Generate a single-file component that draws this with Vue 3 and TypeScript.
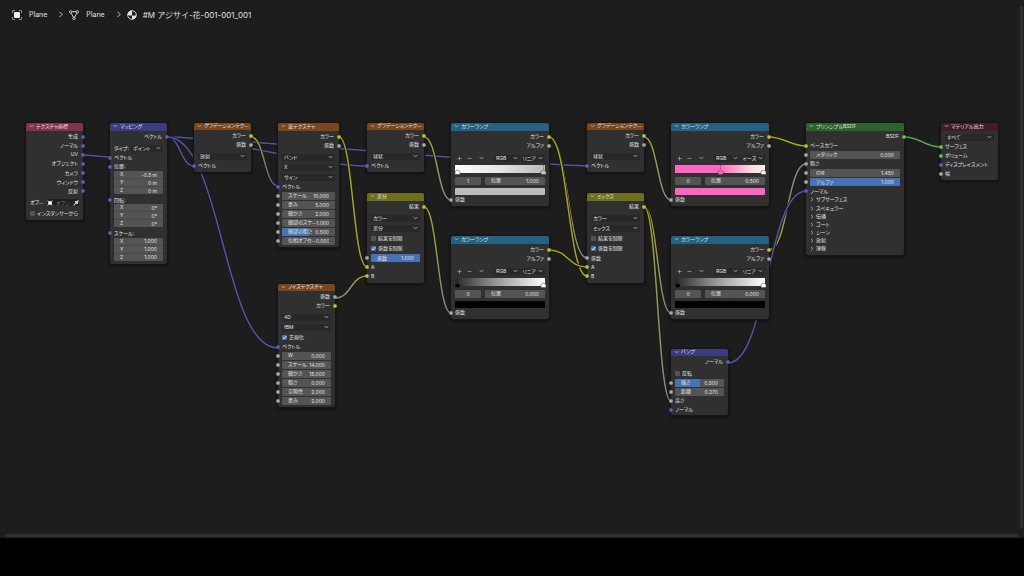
<script setup lang="ts">
type Tone = 'vec' | 'col' | 'val' | 'shd'

interface Row {
  kind: 'out' | 'in' | 'field' | 'select' | 'check' | 'vector' | 'panel' | 'object' | 'ramp'
  label?: string
  tone?: Tone
  value?: string
  fill?: number
  on?: boolean
  gap?: boolean
  axes?: string[]
  ramp?: Ramp
}

interface Ramp {
  index: string
  position: string
  mode: string
  gradient: string
  swatch: string
  stops: { at: number; color: string; active: boolean }[]
}

interface GraphNode {
  id: string
  title: string
  theme: string
  x: number
  y: number
  w: number
  h: number
  rows: Row[]
}

interface Wire {
  from: [number, number]
  to: [number, number]
  a: Tone
  b: Tone
}

const toneColor: Record<Tone, string> = {
  vec: '#6363c7',
  col: '#c7c729',
  val: '#a1a1a1',
  shd: '#63c763',
}

const out = (label: string, tone: Tone): Row => ({ kind: 'out', label, tone })
const inp = (label: string, tone: Tone): Row => ({ kind: 'in', label, tone })
const pick = (value: string, gap = false, label = ''): Row => ({ kind: 'select', value, gap, label })
const num = (label: string, value: string, fill = 0): Row => ({ kind: 'field', label, value, fill, tone: 'val' })
const check = (label: string, on: boolean, gap = false): Row => ({ kind: 'check', label, on, gap })
const panel = (label: string): Row => ({ kind: 'panel', label })

const gradientRows = (shape: string): Row[] => [
  out('カラー', 'col'),
  out('係数', 'val'),
  pick(shape, true),
  inp('ベクトル', 'vec'),
]

const rampRows = (ramp: Ramp): Row[] => [
  out('カラー', 'col'),
  out('アルファ', 'val'),
  { kind: 'ramp', ramp },
  inp('係数', 'val'),
]

const blackRamp: Ramp = {
  index: '0',
  position: '0.000',
  mode: 'リニア',
  gradient: 'linear-gradient(90deg, #262626, #8c8c8c 40%, #ffffff)',
  swatch: '#000000',
  stops: [
    { at: 0, color: '#000000', active: true },
    { at: 1, color: '#ffffff', active: false },
  ],
}

const nodes: GraphNode[] = [
  {
    id: 'coord', title: 'テクスチャ座標', theme: 'input', x: 26, y: 123, w: 57, h: 97,
    rows: [
      out('生成', 'vec'), out('ノーマル', 'vec'), out('UV', 'vec'), out('オブジェクト', 'vec'),
      out('カメラ', 'vec'), out('ウィンドウ', 'vec'), out('反射', 'vec'),
      { kind: 'object', label: 'オブ…', value: 'オブジ', gap: true },
      check('インスタンサーから', false),
    ],
  },
  {
    id: 'mapping', title: 'マッピング', theme: 'vector', x: 110, y: 123, w: 57, h: 141,
    rows: [
      out('ベクトル', 'vec'),
      pick('ポイント', true, 'タイプ:'),
      inp('ベクトル', 'vec'),
      inp('位置:', 'vec'), { kind: 'vector', label: '位置', axes: ['-0.5 m', '0 m', '0 m'] },
      inp('回転:', 'vec'), { kind: 'vector', label: '回転', axes: ['0°', '0°', '0°'] },
      inp('スケール:', 'vec'), { kind: 'vector', label: 'スケール', axes: ['1.000', '1.000', '1.000'] },
    ],
  },
  { id: 'grad1', title: 'グラデーションテク…', theme: 'texture', x: 194, y: 123, w: 57, h: 49, rows: gradientRows('放射') },
  {
    id: 'wave', title: '波テクスチャ', theme: 'texture', x: 278, y: 123, w: 61, h: 124,
    rows: [
      out('カラー', 'col'), out('係数', 'val'),
      pick('バンド', true), pick('X'), pick('サイン'),
      inp('ベクトル', 'vec'),
      num('スケール', '10.000'), num('歪み', '5.000'), num('細かさ', '2.000'),
      num('細部のスケ…', '1.000'), num('細部の粗さ', '0.500', 50), num('位相オフセ…', '0.000'),
    ],
  },
  {
    id: 'noise', title: 'ノイズテクスチャ', theme: 'texture', x: 278, y: 284, w: 57, h: 123,
    rows: [
      out('係数', 'val'), out('カラー', 'col'),
      pick('4D', true), pick('fBM'),
      check('正規化', true),
      inp('ベクトル', 'vec'),
      num('W', '0.000'), num('スケール', '14.000'), num('細かさ', '15.000'),
      num('粗さ', '0.000'), num('空隙性', '2.000'), num('歪み', '2.000'),
    ],
  },
  { id: 'grad2', title: 'グラデーションテク…', theme: 'texture', x: 367, y: 123, w: 57, h: 49, rows: gradientRows('球状') },
  {
    id: 'diff', title: '差分', theme: 'color', x: 367, y: 193, w: 57, h: 90,
    rows: [
      out('結果', 'col'),
      pick('カラー', true), pick('差分'),
      check('結果を制限', false), check('係数を制限', true),
      num('係数', '1.000', 100), inp('A', 'col'), inp('B', 'col'),
    ],
  },
  {
    id: 'ramp1', title: 'カラーランプ', theme: 'convert', x: 451, y: 123, w: 98, h: 83,
    rows: rampRows({
      index: '1', position: '1.000', mode: 'リニア',
      gradient: 'linear-gradient(90deg, #ffffff, #e2e2e2 55%, #b9b9b9)',
      swatch: '#bdbdbd',
      stops: [
        { at: 0, color: '#ffffff', active: false },
        { at: 1, color: '#c4c4c4', active: true },
      ],
    }),
  },
  { id: 'ramp2', title: 'カラーランプ', theme: 'convert', x: 451, y: 236, w: 98, h: 83, rows: rampRows(blackRamp) },
  { id: 'grad3', title: 'グラデーションテク…', theme: 'texture', x: 587, y: 123, w: 57, h: 49, rows: gradientRows('球状') },
  {
    id: 'mix', title: 'ミックス', theme: 'color', x: 587, y: 193, w: 57, h: 90,
    rows: [
      out('結果', 'col'),
      pick('カラー', true), pick('ミックス'),
      check('結果を制限', false), check('係数を制限', true),
      inp('係数', 'val'), inp('A', 'col'), inp('B', 'col'),
    ],
  },
  {
    id: 'ramp3', title: 'カラーランプ', theme: 'convert', x: 671, y: 123, w: 98, h: 83,
    rows: rampRows({
      index: '0', position: '0.500', mode: 'イーズ',
      gradient: 'linear-gradient(90deg, #ff66c4 50%, #ff9ccd 66%, #ffd9e2 84%, #fff0f0)',
      swatch: '#ff66c4',
      stops: [
        { at: 0.5, color: '#ff66c4', active: true },
        { at: 1, color: '#fff0f0', active: false },
      ],
    }),
  },
  { id: 'ramp4', title: 'カラーランプ', theme: 'convert', x: 671, y: 236, w: 98, h: 83, rows: rampRows(blackRamp) },
  {
    id: 'bump', title: 'バンプ', theme: 'vector', x: 671, y: 349, w: 57, h: 66,
    rows: [
      out('ノーマル', 'vec'),
      check('反転', false, true),
      num('強さ', '0.500', 50), num('距離', '0.270'),
      inp('高さ', 'val'), inp('ノーマル', 'vec'),
    ],
  },
  {
    id: 'bsdf', title: 'プリンシプルBSDF', theme: 'shader', x: 806, y: 123, w: 98, h: 132,
    rows: [
      out('BSDF', 'shd'),
      inp('ベースカラー', 'col'), num('メタリック', '0.000'), inp('粗さ', 'val'),
      num('IOR', '1.450'), num('アルファ', '1.000', 100), inp('ノーマル', 'vec'),
      panel('サブサーフェス'), panel('スペキュラー'), panel('伝播'), panel('コート'),
      panel('シーン'), panel('放射'), panel('薄膜'),
    ],
  },
  {
    id: 'output', title: 'マテリアル出力', theme: 'output', x: 941, y: 123, w: 57, h: 57,
    rows: [
      pick('すべて'),
      inp('サーフェス', 'shd'), inp('ボリューム', 'shd'), inp('ディスプレイスメント', 'vec'), inp('幅', 'val'),
    ],
  },
]

const wires: Wire[] = [
  { from: [83, 155], to: [110, 157], a: 'vec', b: 'vec' },
  { from: [167, 137], to: [194, 166], a: 'vec', b: 'vec' },
  { from: [167, 137], to: [367, 166], a: 'vec', b: 'vec' },
  { from: [167, 137], to: [587, 166], a: 'vec', b: 'vec' },
  { from: [167, 137], to: [278, 348], a: 'vec', b: 'vec' },
  { from: [251, 137], to: [278, 186], a: 'col', b: 'vec' },
  { from: [339, 137], to: [367, 267], a: 'col', b: 'col' },
  { from: [335, 298], to: [367, 276], a: 'val', b: 'col' },
  { from: [424, 137], to: [451, 200], a: 'col', b: 'val' },
  { from: [424, 207], to: [451, 313], a: 'col', b: 'val' },
  { from: [549, 137], to: [587, 258], a: 'col', b: 'val' },
  { from: [549, 137], to: [587, 276], a: 'col', b: 'col' },
  { from: [549, 250], to: [587, 267], a: 'col', b: 'col' },
  { from: [644, 137], to: [671, 200], a: 'col', b: 'val' },
  { from: [644, 207], to: [671, 313], a: 'col', b: 'val' },
  { from: [644, 207], to: [671, 401], a: 'col', b: 'val' },
  { from: [769, 137], to: [806, 146], a: 'col', b: 'col' },
  { from: [769, 250], to: [806, 164], a: 'col', b: 'val' },
  { from: [728, 363], to: [806, 191], a: 'vec', b: 'vec' },
  { from: [904, 137], to: [941, 147], a: 'shd', b: 'shd' },
]

function wirePath(w: Wire): string {
  const [x1, y1] = w.from
  const [x2, y2] = w.to
  const dx = x2 - x1
  const slope = Math.abs((y2 - y1) / dx)
  const reach = 0.5 * dx * Math.min(1, slope * 3.25)
  return `M${x1} ${y1} C${x1 + reach} ${y1} ${x2 - reach} ${y2} ${x2} ${y2}`
}

const axisNames = ['X', 'Y', 'Z']
</script>

<template>
  <main class="app">
    <section class="editor">
      <nav class="crumbs" aria-label="パス">
        <a href="#object" class="crumb">
          <svg width="10" height="10" viewBox="0 0 10 10" aria-hidden="true">
            <path d="M.5 3V.5H3M7 .5h2.500V3M9.500 7v2.500H7M3 9.500H.5V7" fill="none" stroke="#8c8c8c" />
            <rect x="2" y="2" width="6" height="6" rx="1" fill="#ededed" />
          </svg>
          <span>Plane</span>
        </a>
        <svg class="sep" width="4" height="7" viewBox="0 0 4 7" aria-hidden="true"><path d="M.5 .8 3.200 3.500.5 6.200" /></svg>
        <a href="#mesh" class="crumb">
          <svg width="10" height="10" viewBox="0 0 10 10" fill="none" stroke="#d0d0d0" aria-hidden="true">
            <path d="M3 1.700h4M2 3.100l2.500 4.200M8 3.100 5.500 7.300" />
            <circle cx="1.700" cy="1.800" r="1.200" /><circle cx="8.300" cy="1.800" r="1.200" /><circle cx="5" cy="8.300" r="1.200" />
          </svg>
          <span>Plane</span>
        </a>
        <svg class="sep" width="4" height="7" viewBox="0 0 4 7" aria-hidden="true"><path d="M.5 .8 3.200 3.500.5 6.200" /></svg>
        <a href="#material" class="crumb current">
          <svg width="10" height="10" viewBox="0 0 10 10" aria-hidden="true">
            <circle cx="5" cy="5" r="4.300" fill="#1d1d1d" stroke="#e6e6e6" stroke-width=".9" />
            <path d="M5 .7A4.300 4.300 0 0 0 .7 5C2.500 5.800 4 5.700 5 5.200Z" fill="#e6e6e6" />
            <path d="M5 5.200C6.500 5.900 8 5.700 9.300 5A4.300 4.300 0 0 1 5 9.300Z" fill="#e6e6e6" />
          </svg>
          <span>#M アジサイ-花-001-001_001</span>
        </a>
      </nav>

      <svg class="wires" aria-hidden="true">
        <defs>
          <linearGradient
            v-for="(w, i) in wires" :id="'wire' + i" :key="i" gradientUnits="userSpaceOnUse"
            :x1="w.from[0]" :y1="w.from[1]" :x2="w.to[0]" :y2="w.to[1]"
          >
            <stop offset="0" :stop-color="toneColor[w.a]" />
            <stop offset="1" :stop-color="toneColor[w.b]" />
          </linearGradient>
        </defs>
        <g v-for="(w, i) in wires" :key="i" fill="none">
          <path :d="wirePath(w)" stroke="#181818" stroke-width="3" />
          <path :d="wirePath(w)" :stroke="`url(#wire${i})`" stroke-width="1.500" stroke-opacity=".8" />
        </g>
      </svg>

      <article
        v-for="n in nodes" :key="n.id" class="node"
        :style="{ left: n.x + 'px', top: n.y + 'px', width: n.w + 'px', height: n.h + 'px' }"
      >
        <header class="head" :class="n.theme">
          <button type="button" class="fold" :aria-label="n.title">
            <svg width="5" height="4" viewBox="0 0 5 4" class="chev"><path d="M.7 1 2.500 2.900 4.300 1" /></svg>
          </button>
          <span class="title">{{ n.title }}</span>
        </header>
        <div class="body">
          <div v-for="(r, i) in n.rows" :key="i" class="row" :class="[r.kind, { gap: r.gap }]">
            <i v-if="r.tone" class="socket" :class="[r.tone, { right: r.kind === 'out' }]"></i>

            <span v-if="r.kind === 'out' || r.kind === 'in'">{{ r.label }}</span>

            <label v-else-if="r.kind === 'field'" class="box">
              <span class="fill" :style="{ width: r.fill + '%' }"></span>
              <span class="name">{{ r.label }}</span>
              <input type="text" :value="r.value">
            </label>

            <label v-else-if="r.kind === 'select'" class="pick">
              <span v-if="r.label" class="picklabel">{{ r.label }}</span>
              <span class="drop">
                <select :aria-label="r.value"><option>{{ r.value }}</option></select>
                <svg width="5" height="4" viewBox="0 0 5 4" class="chev"><path d="M.7 1 2.500 2.900 4.300 1" /></svg>
              </span>
            </label>

            <label v-else-if="r.kind === 'check'" class="tick">
              <input type="checkbox" :checked="r.on">
              <svg v-if="r.on" class="mark" width="5" height="5" viewBox="0 0 5 5"><path d="M.8 2.600 2 3.900 4.300 1" /></svg>
              <span>{{ r.label }}</span>
            </label>

            <div v-else-if="r.kind === 'vector'" class="axes">
              <label v-for="(v, k) in r.axes" :key="k" class="axis">
                <span>{{ axisNames[k] }}</span>
                <input type="text" :value="v">
              </label>
            </div>

            <button v-else-if="r.kind === 'panel'" type="button" class="expand">
              <svg width="4" height="5" viewBox="0 0 4 5" class="chev"><path d="M1 .7 2.900 2.500 1 4.300" /></svg>
              <span>{{ r.label }}</span>
            </button>

            <label v-else-if="r.kind === 'object'" class="objrow">
              <span class="objname">{{ r.label }}</span>
              <span class="objbox">
                <svg width="6" height="6" viewBox="0 0 6 6"><path d="M.3 1.600V.3h1.300M4.400.3h1.300v1.300M5.700 4.400v1.300H4.400M1.600 5.700H.3V4.400" fill="none" stroke="#8c8c8c" stroke-width=".6" /><rect x="1.200" y="1.200" width="3.600" height="3.600" fill="#fff" /></svg>
                <input type="text" :placeholder="r.value">
                <svg width="6" height="6" viewBox="0 0 6 6"><path d="M.6 5.400 3.300 2.700" stroke="#d0d0d0" stroke-width="1.100" /><path d="M2.700 1.800 4.200 3.300M3.600 2.400 5 1" stroke="#ececec" stroke-width="1.500" stroke-linecap="round" /></svg>
              </span>
            </label>

            <div v-else-if="r.ramp" class="ramp">
              <div class="tools">
                <button type="button" aria-label="追加"><svg width="5" height="5" viewBox="0 0 5 5" class="chev thin"><path d="M2.500.5v4M.5 2.500h4" /></svg></button>
                <button type="button" aria-label="削除"><svg width="5" height="5" viewBox="0 0 5 5" class="chev thin"><path d="M.5 2.500h4" /></svg></button>
                <button type="button" aria-label="ツール"><svg width="5" height="4" viewBox="0 0 5 4" class="chev"><path d="M.7 1 2.500 2.900 4.300 1" /></svg></button>
                <span class="drop">
                  <select aria-label="カラーモード"><option>RGB</option></select>
                  <svg width="5" height="4" viewBox="0 0 5 4" class="chev"><path d="M.7 1 2.500 2.900 4.300 1" /></svg>
                </span>
                <span class="drop">
                  <select aria-label="補間"><option>{{ r.ramp.mode }}</option></select>
                  <svg width="5" height="4" viewBox="0 0 5 4" class="chev"><path d="M.7 1 2.500 2.900 4.300 1" /></svg>
                </span>
              </div>
              <div class="band" :style="{ background: r.ramp.gradient }">
                <div class="track">
                  <svg
                    v-for="s in r.ramp.stops" :key="s.at" class="stop" :style="{ left: s.at * 100 + '%' }"
                    width="7" height="10" viewBox="0 0 7 10"
                  >
                    <path v-if="s.active" d="M3.500 0v6" stroke="#222" stroke-opacity=".6" stroke-width=".7" stroke-dasharray="1.500 1" />
                    <path d="M1 9.500V6.600L3.500 5 6 6.600v2.900Z" :fill="s.color" stroke="#3c3c3c" stroke-width=".5" />
                  </svg>
                </div>
              </div>
              <div class="pair">
                <label class="box index"><input type="text" aria-label="番号" :value="r.ramp.index"></label>
                <label class="box"><span class="name">位置</span><input type="text" :value="r.ramp.position"></label>
              </div>
              <button type="button" class="swatch" aria-label="カラー" :style="{ background: r.ramp.swatch }"></button>
            </div>
          </div>
        </div>
      </article>

      <div class="vbar"></div>
      <div class="hbar"></div>
    </section>
    <footer class="strip"></footer>
  </main>
</template>

<style>
html,
body {
  margin: 0;
  background: #000;
}
</style>

<style scoped>
.app {
  display: flex;
  flex-direction: column;
  min-height: 100vh;
  overflow: hidden;
  color: #e2e2e2;
  font-family: Inter, "Noto Sans CJK JP", sans-serif;
  font-size: 5px;
  font-feature-settings: "palt";
  line-height: 1;
}
.app * {
  box-sizing: border-box;
}
.editor {
  position: relative;
  flex: 1;
  background: #1d1d1d radial-gradient(circle at 1px 1px, #212121 1px, transparent 1px) 27px 32px / 41px 41px;
}
.strip {
  height: 38px;
  background: #000;
}
.crumbs {
  display: flex;
  align-items: center;
  gap: 12px;
  height: 29px;
  padding: 0 12px;
  font-size: 7px;
  font-feature-settings: normal;
}
.crumb {
  display: flex;
  align-items: center;
  gap: 7px;
  color: #e0e0e0;
  text-decoration: none;
  white-space: nowrap;
}
.crumb.current {
  gap: 6px;
  font-size: 8px;
}
.sep {
  margin-right: -6px;
  fill: none;
  stroke: #c8c8c8;
}
.wires {
  position: absolute;
  inset: 0;
  width: 100%;
  height: 100%;
}
.node {
  position: absolute;
  display: flex;
  flex-direction: column;
  border-radius: 2px;
  background: #303030;
  box-shadow: 0 0 0 1px #161616, 0 1px 3px 1px rgba(0, 0, 0, 0.5);
}
.head {
  display: flex;
  align-items: center;
  height: 8px;
  padding: 0 0 2px 3px;
  border-radius: 2px 2px 0 0;
  white-space: nowrap;
}
.head.input { background: #83314d; }
.head.vector { background: #3c3c83; }
.head.texture { background: #79461d; }
.head.color { background: #6e6e1d; }
.head.convert { background: #246283; }
.head.shader { background: #2b652b; }
.head.output { background: #431c28; }
button {
  display: flex;
  align-items: center;
  padding: 0;
  border: 0;
  background: none;
  color: inherit;
  font: inherit;
  font-feature-settings: inherit;
}
.fold {
  width: 7px;
}
.chev {
  flex: none;
  fill: none;
  stroke: #b8b8b8;
  stroke-width: 0.8;
}
.chev.thin {
  stroke-width: 0.6;
}
.body {
  display: flex;
  flex: 1;
  flex-direction: column;
  justify-content: space-between;
  padding: 1px 0 2px;
}
.row {
  position: relative;
  display: flex;
  align-items: center;
  height: 9px;
  padding: 0 4px;
  white-space: nowrap;
}
.row.out {
  justify-content: flex-end;
  padding-right: 5px;
}
.row.select,
.row.check,
.row.object {
  height: 10px;
}
.row.vector {
  height: 24px;
  margin-top: -1px;
  margin-bottom: 1px;
}
.row.panel {
  height: 8px;
}
.row.ramp {
  height: auto;
}
.row.gap {
  margin-top: 2px;
}
.socket {
  position: absolute;
  left: -2px;
  width: 4px;
  height: 4px;
  border: 1px solid rgba(0, 0, 0, 0.2);
  border-radius: 50%;
}
.socket.right {
  right: -2px;
  left: auto;
}
.socket.vec { background: #6363d8; }
.socket.col { background: #d0d029; }
.socket.val { background: #b4b4b4; }
.socket.shd { background: #63d763; }
input,
select {
  min-width: 0;
  margin: 0;
  padding: 0;
  border: 0;
  outline: 0;
  background: none;
  color: inherit;
  font: inherit;
  font-feature-settings: inherit;
  appearance: none;
}
.box {
  position: relative;
  display: flex;
  flex: 1;
  align-items: center;
  min-width: 0;
  height: 8px;
  padding: 0 6px;
  overflow: hidden;
  border-radius: 1px;
  background: #545454;
}
.fill {
  position: absolute;
  inset: 0 auto 0 0;
  background: #4772b3;
}
.name,
.box input {
  position: relative;
}
.box input,
.axis input {
  flex: 1;
  width: 0;
  height: 7px;
  text-align: right;
}
.pick {
  display: flex;
  flex: 1;
  align-items: center;
  min-width: 0;
}
.picklabel {
  width: 17px;
}
.drop {
  position: relative;
  display: flex;
  flex: 1;
  align-items: center;
  min-width: 0;
  height: 7px;
  padding: 0 2px;
  border-radius: 1px;
  background: #282828;
}
.drop select {
  flex: 1;
  width: 0;
  height: 7px;
}
.tick {
  position: relative;
  display: flex;
  align-items: center;
  gap: 2px;
}
.tick input {
  width: 5px;
  height: 5px;
  border-radius: 1px;
  background: #545454;
}
.tick input:checked {
  background: #4772b3;
}
.mark {
  position: absolute;
  left: 0;
  fill: none;
  stroke: #fff;
  stroke-width: 0.9;
}
.axes {
  display: flex;
  flex: 1;
  flex-direction: column;
  gap: 1px;
  overflow: hidden;
  border-radius: 1px;
  background: #484848;
}
.axis {
  display: flex;
  flex: 1;
  align-items: center;
  min-height: 0;
  padding: 0 6px;
  background: #545454;
}
.expand {
  gap: 2px;
}
.objrow {
  display: flex;
  flex: 1;
  align-items: center;
}
.objname {
  width: 17px;
}
.objbox {
  display: flex;
  flex: 1;
  align-items: center;
  gap: 3px;
  height: 7px;
  border-radius: 1px;
  background: #1f1f1f;
}
.objbox input {
  flex: 1;
  width: 0;
  height: 7px;
}
.objbox input::placeholder {
  color: #777;
  opacity: 1;
}
.ramp {
  flex: 1;
}
.tools {
  display: grid;
  grid-template-columns: 10px 12px 16px 1fr 1fr;
  align-items: center;
  height: 9px;
  margin-top: 3px;
  padding-left: 1px;
}
.tools button {
  padding-left: 1px;
}
.tools .drop + .drop {
  margin-left: 1px;
}
.band {
  height: 8px;
  margin-top: 2px;
  padding: 0 2px;
}
.track {
  position: relative;
  height: 8px;
}
.stop {
  position: absolute;
  top: 0;
  margin-left: -3px;
}
.pair {
  display: grid;
  grid-template-columns: 26px 1fr;
  gap: 4px;
  margin-top: 4px;
}
.index input {
  text-align: center;
}
.swatch {
  width: 100%;
  height: 7px;
  margin-top: 3px;
  border-radius: 1px;
}
.vbar {
  position: absolute;
  top: 6px;
  right: 1px;
  bottom: 10px;
  width: 3px;
  border-radius: 2px;
  background: #303030;
}
.hbar {
  position: absolute;
  right: 6px;
  bottom: 1px;
  left: 5px;
  height: 3px;
  border-radius: 2px;
  background: #303030;
}
</style>
